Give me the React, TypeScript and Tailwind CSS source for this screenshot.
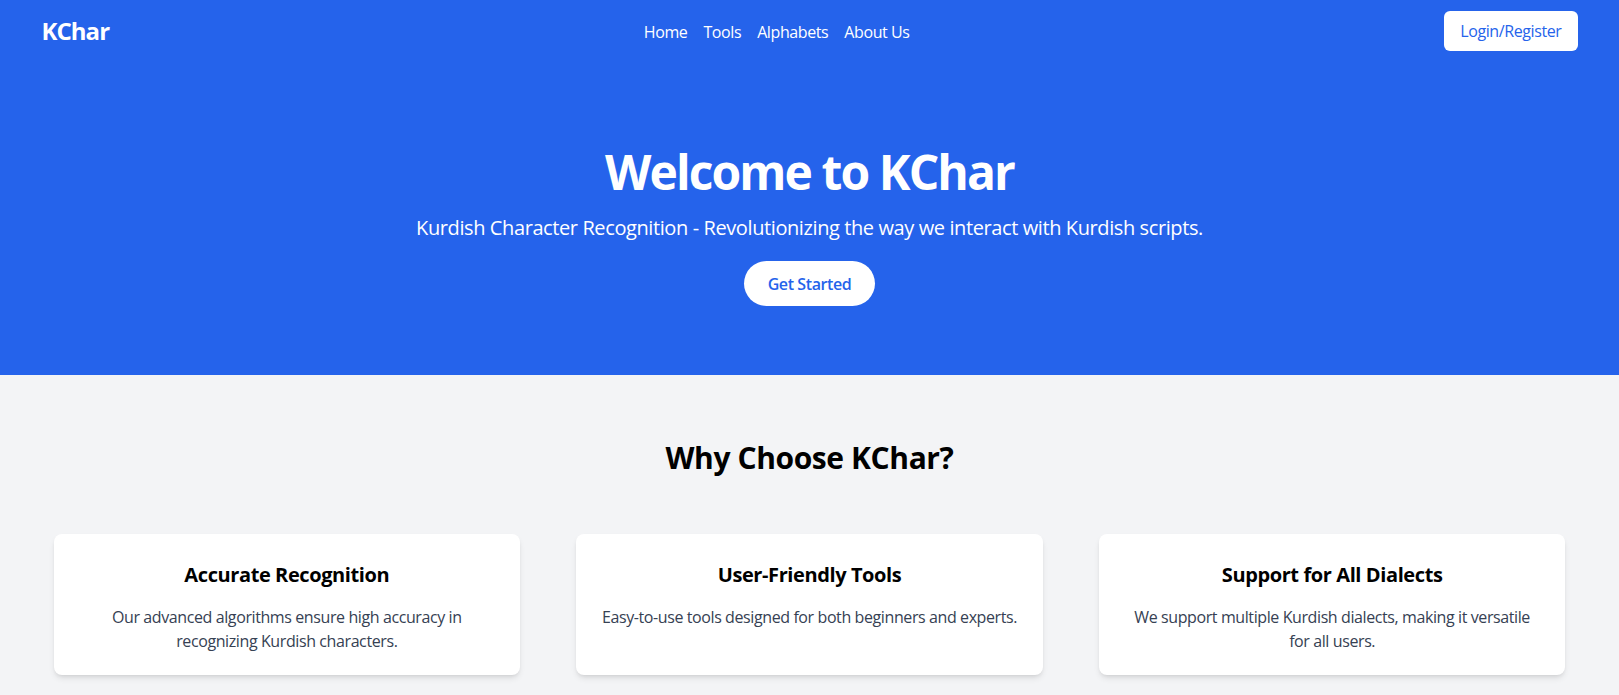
import React from "react";

const features = [
  {
    title: "Accurate Recognition",
    text: "Our advanced algorithms ensure high accuracy in recognizing Kurdish characters.",
  },
  {
    title: "User-Friendly Tools",
    text: "Easy-to-use tools designed for both beginners and experts.",
  },
  {
    title: "Support for All Dialects",
    text: "We support multiple Kurdish dialects, making it versatile for all users.",
  },
];

const App = () => {
  return (
    <div className="min-h-screen bg-gray-100 font-['Open_Sans','Noto_Sans',sans-serif] tracking-[-0.025em]">
      {/* header + hero */}
      <header className="bg-[#2563eb] text-white">
        <nav className="max-w-[1536px] mx-auto flex items-center justify-between py-[11px]">
          <div className="text-2xl font-bold tracking-[-0.04em]">KChar</div>
          <ul className="flex space-x-4 text-base pt-0.5">
            <li>Home</li>
            <li>Tools</li>
            <li>Alphabets</li>
            <li>About Us</li>
          </ul>
          <button className="h-10 px-4 bg-white text-[#2563eb] rounded-md text-base">
            Login/Register
          </button>
        </nav>

        <div className="text-center pt-[86px] pb-[69px]">
          <h1 className="text-5xl leading-none font-bold tracking-[-0.04em] mb-[18px]">Welcome to KChar</h1>
          <p className="text-xl mb-[19px]">
            Kurdish Character Recognition - Revolutionizing the way we interact with Kurdish scripts.
          </p>
          <button className="h-[45px] px-6 bg-white text-[#2563eb] font-semibold rounded-full">
            Get Started
          </button>
        </div>
      </header>

      <section className="pt-[65px] pb-10">
        <h2 className="text-3xl font-bold text-center text-black mb-[58px]">Why Choose KChar?</h2>

        <div className="max-w-[1536px] mx-auto px-3 grid grid-cols-3 gap-14">
          {features.map((f) => (
            <div key={f.title} className="bg-white rounded-lg shadow-md px-6 pt-[27px] pb-[22px] text-center">
              <h3 className="text-xl font-bold text-black mb-4">{f.title}</h3>
              <p className="text-gray-700">{f.text}</p>
            </div>
          ))}
        </div>
      </section>
    </div>
  );
};

export default App;
